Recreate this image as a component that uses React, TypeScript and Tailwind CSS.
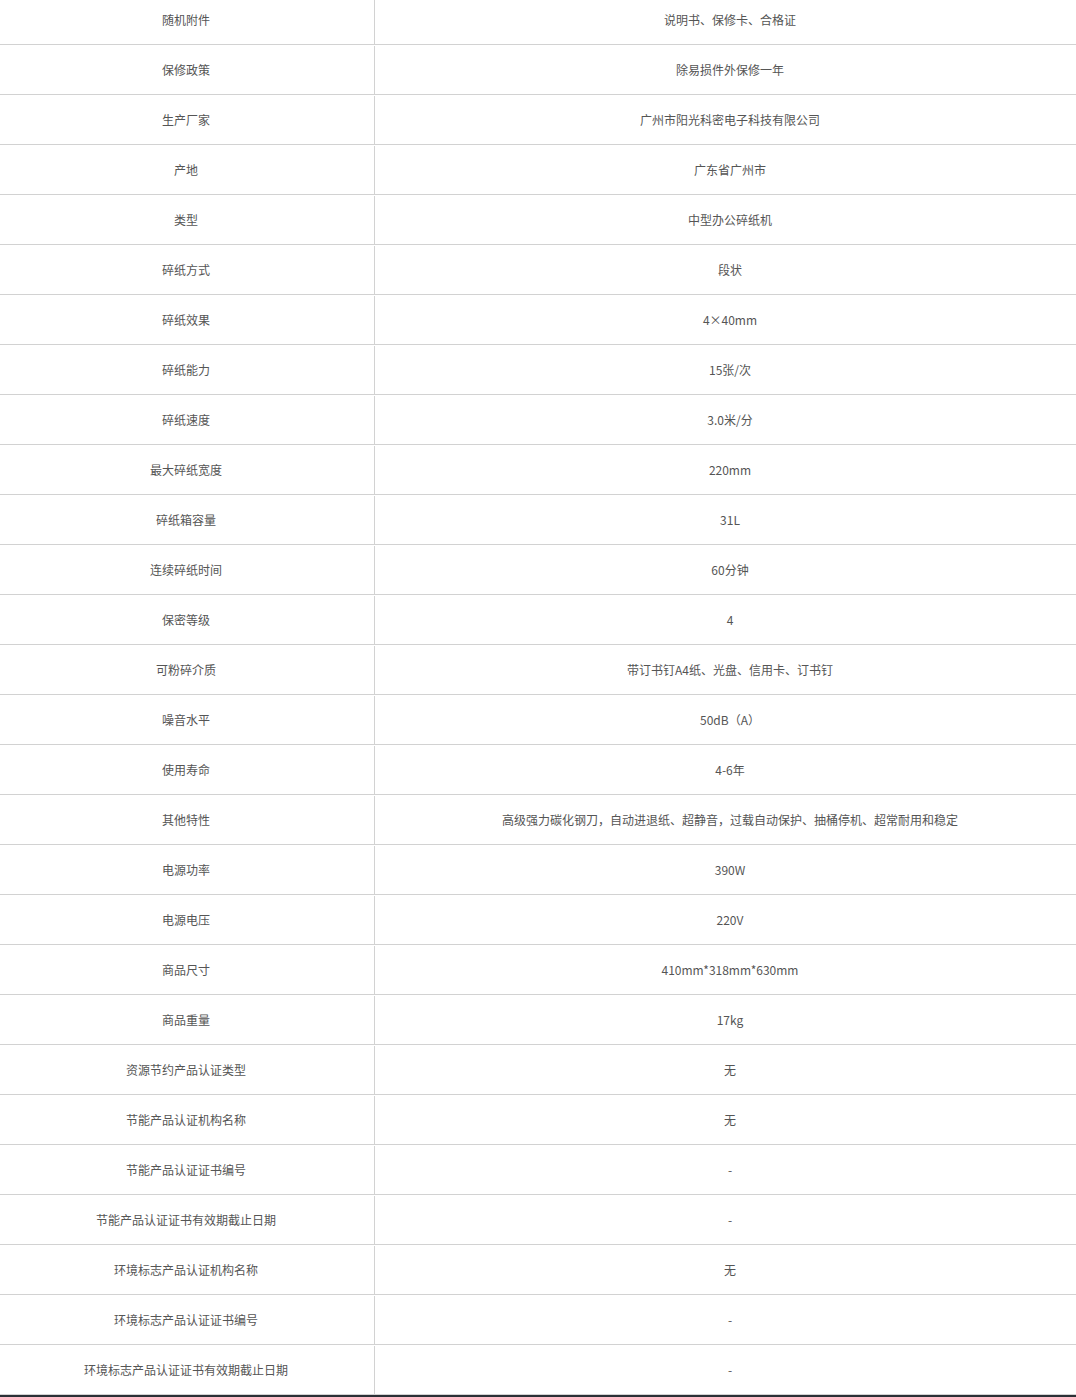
const rows: [string, string][] = [
  ['随机附件', '说明书、保修卡、合格证'],
  ['保修政策', '除易损件外保修一年'],
  ['生产厂家', '广州市阳光科密电子科技有限公司'],
  ['产地', '广东省广州市'],
  ['类型', '中型办公碎纸机'],
  ['碎纸方式', '段状'],
  ['碎纸效果', '4×40mm'],
  ['碎纸能力', '15张/次'],
  ['碎纸速度', '3.0米/分'],
  ['最大碎纸宽度', '220mm'],
  ['碎纸箱容量', '31L'],
  ['连续碎纸时间', '60分钟'],
  ['保密等级', '4'],
  ['可粉碎介质', '带订书钉A4纸、光盘、信用卡、订书钉'],
  ['噪音水平', '50dB（A）'],
  ['使用寿命', '4-6年'],
  ['其他特性', '高级强力碳化钢刀，自动进退纸、超静音，过载自动保护、抽桶停机、超常耐用和稳定'],
  ['电源功率', '390W'],
  ['电源电压', '220V'],
  ['商品尺寸', '410mm*318mm*630mm'],
  ['商品重量', '17kg'],
  ['资源节约产品认证类型', '无'],
  ['节能产品认证机构名称', '无'],
  ['节能产品认证证书编号', '-'],
  ['节能产品认证证书有效期截止日期', '-'],
  ['环境标志产品认证机构名称', '无'],
  ['环境标志产品认证证书编号', '-'],
  ['环境标志产品认证证书有效期截止日期', '-'],
];

export default function App() {
  return (
    <div className="w-[1076px] h-[1397px] overflow-hidden bg-white font-['Microsoft_YaHei','Noto_Sans_CJK_SC',sans-serif]">
      <div className="-mt-[5px] w-[1086px]">
        {rows.map(([k, v], i) => (
          <div
            key={i}
            className="flex h-[50px] border-b border-[#d2d2d2] pt-[1px] text-[12px] leading-none text-[#555]"
          >
            <div className="flex w-[375px] items-center justify-center border-r border-[#d2d2d2] pr-[2px]">
              {k}
            </div>
            <div className="flex flex-1 items-center justify-center pr-[1px]">{v}</div>
          </div>
        ))}
      </div>
      <div className="h-[4px] bg-[#2b3036]" />
    </div>
  );
}
